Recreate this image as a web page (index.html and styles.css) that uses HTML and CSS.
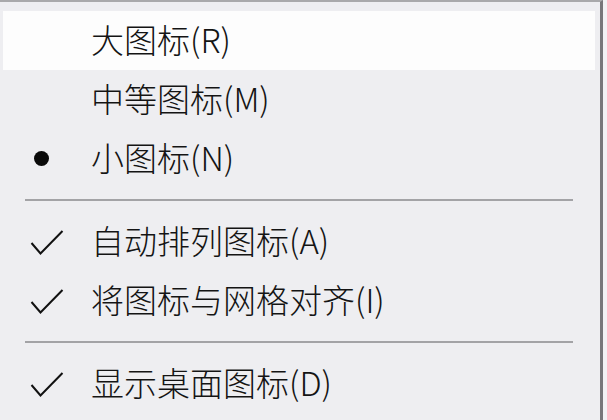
FILE: index.html
```html
<!DOCTYPE html>
<html lang="zh-CN">
<head>
<meta charset="utf-8">
<title>菜单</title>
<link rel="stylesheet" href="styles.css">
</head>
<body>
<div class="menu">
  <div class="item hover"><span class="mark"></span><span class="label">大图标(R)</span></div>
  <div class="item"><span class="mark"></span><span class="label">中等图标(M)</span></div>
  <div class="item"><span class="mark"><span class="dot"></span></span><span class="label">小图标(N)</span></div>
  <div class="sep"></div>
  <div class="item"><span class="mark"><svg class="check" width="34" height="27" viewBox="0 0 34 27"><path d="M1.5 14 L10.5 24.5 L32.5 2" fill="none" stroke="#111" stroke-width="2"/></svg></span><span class="label">自动排列图标(A)</span></div>
  <div class="item"><span class="mark"><svg class="check" width="34" height="27" viewBox="0 0 34 27"><path d="M1.5 14 L10.5 24.5 L32.5 2" fill="none" stroke="#111" stroke-width="2"/></svg></span><span class="label">将图标与网格对齐(I)</span></div>
  <div class="sep"></div>
  <div class="item"><span class="mark"><svg class="check" width="34" height="27" viewBox="0 0 34 27"><path d="M1.5 14 L10.5 24.5 L32.5 2" fill="none" stroke="#111" stroke-width="2"/></svg></span><span class="label">显示桌面图标(D)</span></div>
</div>
</body>
</html>
```

FILE: styles.css
```css
html, body {
  margin: 0;
  padding: 0;
}
body {
  width: 607px;
  height: 420px;
  overflow: hidden;
  background: #f2f2f4;
  font-family: "Noto Sans CJK SC", "Noto Sans", sans-serif;
}
.menu {
  box-sizing: border-box;
  width: 603px;
  height: 420px;
  background: #eeeef1;
  border-top: 2px solid #a9a9ab;
  border-right: 3px solid #77777a;
  padding: 9px 5px 0 3px;
}
.item {
  display: flex;
  align-items: center;
  height: 59px;
}
.item.hover {
  background: #fdfdfd;
}
.mark {
  width: 88px;
  flex: none;
  display: flex;
  align-items: center;
  padding-left: 27px;
  box-sizing: border-box;
}
.dot {
  display: block;
  width: 15px;
  height: 15px;
  margin-left: 4px;
  border-radius: 50%;
  background: #0a0a0a;
}
.check {
  display: block;
  margin-top: 2px;
}
.label {
  font-size: 33px;
  font-weight: 300;
  color: #141414;
  line-height: 1;
  position: relative;
  top: -1px;
}
.sep {
  height: 24px;
  display: flex;
  align-items: center;
  padding: 0 22px 0 22px;
}
.sep::before {
  content: "";
  flex: 1;
  height: 2px;
  background: #a3a3a6;
}
```
